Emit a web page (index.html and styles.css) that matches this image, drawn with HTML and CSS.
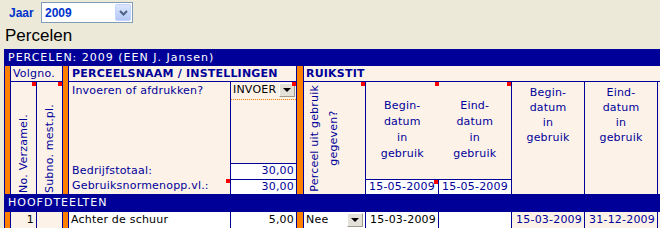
FILE: index.html
```html
<!DOCTYPE html>
<html>
<head>
  <title>Percelen</title>
  <link rel="stylesheet" href="styles.css">
</head>
<body>
  <div class="jaar-bar">
    <label class="jaar-label">Jaar</label>
    <div class="jaar-select">
      <span>2009</span>
      <span class="jaar-btn">
        <svg width="9" height="6" viewBox="0 0 9 6"><polyline points="1,1 4.5,4.5 8,1" fill="none" stroke="#4d6185" stroke-width="2"/></svg>
      </span>
    </div>
  </div>
  <h1>Percelen</h1>

  <table class="grid">
    <colgroup>
      <col class="w-or"><col class="w-a"><col class="w-a"><col class="w-or">
      <col class="w-c"><col class="w-d"><col class="w-or2"><col class="w-e">
      <col class="w-dt"><col class="w-dt"><col class="w-dt"><col class="w-dt"><col class="w-j">
    </colgroup>

    <tr class="row-bar">
      <td colspan="13" class="bar">PERCELEN: 2009 (EEN J. Jansen)</td>
    </tr>

    <tr class="row-head">
      <td class="or" rowspan="5"></td>
      <td colspan="2" class="head">Volgno.</td>
      <td class="or" rowspan="5"></td>
      <td colspan="2" class="head bold pad3">PERCEELSNAAM / INSTELLINGEN</td>
      <td class="or" rowspan="5"></td>
      <td colspan="6" class="head bold">RUIKSTIT</td>
    </tr>

    <tr class="row-r1">
      <td rowspan="4" class="vt-cell"><span class="mark"></span><div class="vt-wrap"><span class="vt">No. Verzamel.</span></div></td>
      <td rowspan="4" class="vt-cell"><span class="mark"></span><div class="vt-wrap"><span class="vt">Subno. mest.pl.</span></div></td>
      <td class="lbl lbl-top">Invoeren of afdrukken?</td>
      <td class="invoer">
        <span class="mark"></span>
        <div class="sel"><span>INVOER</span><span class="sel-btn"><i></i></span></div>
      </td>
      <td rowspan="4" class="vt-cell"><span class="mark"></span><div class="vt-wrap left"><span class="vt mid">Perceel uit gebruik<br>gegeven?</span></div></td>
      <td rowspan="3" class="dt-head dt-left"><span class="mark"></span>Begin-<br>datum<br>in<br>gebruik</td>
      <td rowspan="3" class="dt-head dt-right"><span class="mark"></span>Eind-<br>datum<br>in<br>gebruik</td>
      <td rowspan="4" class="dt-top">Begin-<br>datum<br>in<br>gebruik</td>
      <td rowspan="4" class="dt-top">Eind-<br>datum<br>in<br>gebruik</td>
      <td rowspan="4"></td>
    </tr>
    <tr class="row-r2">
      <td class="lbl"></td>
      <td class="gap"></td>
    </tr>
    <tr class="row-r3">
      <td class="lbl">Bedrijfstotaal:</td>
      <td class="box">30,00</td>
    </tr>
    <tr class="row-r4">
      <td class="lbl lbl-last"><span class="mark"></span>Gebruiksnormenopp.vl.:</td>
      <td class="box">30,00</td>
      <td class="box-date"><span class="mark"></span>15-05-2009</td>
      <td class="box-date">15-05-2009</td>
    </tr>

    <tr class="row-bar2">
      <td colspan="13" class="bar">HOOFDTEELTEN</td>
    </tr>

    <tr class="row-data">
      <td class="or"></td>
      <td class="num">1</td>
      <td></td>
      <td class="or"></td>
      <td class="val dotted">Achter de schuur</td>
      <td class="val num dotted">5,00</td>
      <td class="or"></td>
      <td class="val dotted">
        <div class="sel"><span>Nee</span><span class="sel-btn"><i></i></span></div>
      </td>
      <td class="val date dotted">15-03-2009</td>
      <td class="val dotted"></td>
      <td class="date blue">15-03-2009</td>
      <td class="date blue">31-12-2009</td>
      <td></td>
    </tr>
  </table>
</body>
</html>
```

FILE: styles.css
```css
body {
  margin: 0;
  background: #ece9d8;
  font-family: "DejaVu Sans", Verdana, sans-serif;
  overflow: hidden;
}
.jaar-bar {
  display: flex;
  align-items: center;
  height: 21px;
  padding: 2px 0 0 9px;
}
.jaar-label {
  width: 32px;
  font: bold 12px "Liberation Sans", Arial, sans-serif;
  color: #0033cc;
}
.jaar-select {
  display: flex;
  align-items: center;
  justify-content: space-between;
  box-sizing: border-box;
  width: 92px;
  height: 21px;
  padding: 0 1px 0 3px;
  border: 1px solid #7f9db9;
  background: #fff;
  font: bold 12px "Liberation Sans", Arial, sans-serif;
  color: #0033cc;
}
.jaar-btn {
  display: flex;
  align-items: center;
  justify-content: center;
  box-sizing: border-box;
  width: 16px;
  height: 17px;
  border: 1px solid #c3d3fd;
  border-radius: 2px;
  background: linear-gradient(#dce6fe, #b3c8f6);
}
h1 {
  margin: 3px 0 3px 5px;
  font: normal 17px/20px "Liberation Sans", Arial, sans-serif;
  color: #000;
}

/* tabel */
.grid {
  margin-left: 4px;
  width: 713px;
  table-layout: fixed;
  border-collapse: collapse;
  border: 1px solid #000099;
  font-size: 11px;
  line-height: 14px;
  letter-spacing: 0.2px;
  color: #000099;
}
.w-or { width: 6px; }
.w-or2 { width: 7px; }
.w-a { width: 26px; }
.w-c { width: 162px; }
.w-d { width: 66px; }
.w-e { width: 62px; }
.w-dt { width: 73px; }
.w-j { width: 60px; }

.grid td {
  position: relative;
  padding: 0 2px;
  border: 1px solid #000099;
  background: #fcf2e8;
  vertical-align: middle;
  white-space: nowrap;
  overflow: hidden;
}
.row-bar td { height: 15px; }
.row-head td { height: 15px; }
.row-r1 td { height: 15px; }
.row-r2 td { height: 63px; }
.row-r3 td { height: 15px; }
.row-r4 td { height: 14px; }
.row-bar2 td { height: 16px; }
.row-data td { height: 16px; }

.grid td.bar {
  background: #000099;
  color: #fff;
  padding-left: 3px;
  letter-spacing: 1px;
}
.grid td.or {
  background: #ff8000;
  padding: 0;
}
.bold { font-weight: bold; }
.grid td.pad3 { padding-left: 3px; }

.mark {
  position: absolute;
  top: 0;
  right: 0;
  width: 4px;
  height: 4px;
  background: #ff0000;
}

/* staande tekst */
.grid td.vt-cell {
  padding: 0;
  vertical-align: bottom;
}
.vt-wrap {
  display: flex;
  justify-content: center;
  align-items: flex-end;
  height: 109px;
}
.vt-wrap.left {
  justify-content: flex-start;
  align-items: center;
  padding-left: 1px;
}
.vt {
  writing-mode: vertical-rl;
  transform: rotate(180deg);
  line-height: 19px;
  padding-top: 1px;
}
.vt.mid { text-align: center; }

/* labels en invoer */
.grid td.lbl {
  padding-left: 3px;
  border-top: none;
  border-bottom: none;
}
.grid td.lbl-top { vertical-align: top; padding-top: 2px; }
.grid td.invoer {
  padding: 0;
  border-bottom: 1px dotted #ff8000;
  vertical-align: top;
}
.grid td.gap { border-top: none; }
.grid td.box {
  background: #fff;
  text-align: right;
  padding-right: 2px;
}
.grid td.box-date {
  background: #fff;
  text-align: center;
  padding: 0;
}
.grid td.dt-head {
  text-align: center;
  line-height: 16px;
}
.grid td.dt-left { border-right: none; }
.grid td.dt-right { border-left: none; }
.grid td.dt-top {
  text-align: center;
  vertical-align: top;
  line-height: 15px;
  padding-top: 3px;
}

.sel {
  display: flex;
  align-items: center;
  justify-content: space-between;
  height: 15px;
  padding: 0 1px 0 2px;
  color: #000;
}
.sel-btn {
  display: flex;
  align-items: center;
  justify-content: center;
  box-sizing: border-box;
  width: 16px;
  height: 14px;
  background: #e3e1d8;
  border: 1px solid;
  border-color: #fff #9d9a8c #9d9a8c #fff;
}
.sel-btn i {
  width: 0;
  height: 0;
  border-left: 4px solid transparent;
  border-right: 4px solid transparent;
  border-top: 4px solid #000;
}

/* gegevensrij */
.grid td.val {
  background: #fff;
  color: #000;
}
.grid td.dotted { border-bottom: 1px dotted #ff8000; }
.grid td.num { text-align: right; }
.grid td.date { text-align: right; }
.grid td.blue { color: #000099; }
.row-data td:nth-child(2) { color: #000; }
.grid td.val .sel { padding: 0; }
```
